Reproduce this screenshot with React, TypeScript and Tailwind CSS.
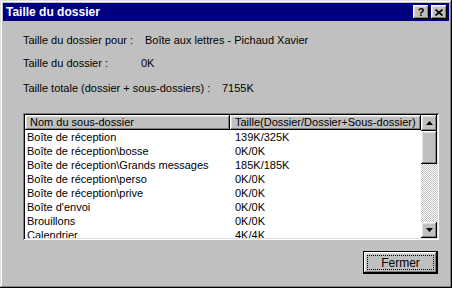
const rows = [
    ['Boîte de réception', '139K/325K'],
    ['Boîte de réception\\bosse', '0K/0K'],
    ['Boîte de réception\\Grands messages', '185K/185K'],
    ['Boîte de réception\\perso', '0K/0K'],
    ['Boîte de réception\\prive', '0K/0K'],
    ["Boîte d'envoi", '0K/0K'],
    ['Brouillons', '0K/0K'],
    ['Calendrier', '4K/4K'],
]

const raised = 'shadow-[inset_-1px_-1px_#000,inset_1px_1px_#fff,inset_-2px_-2px_#808080,inset_2px_2px_#dfdfdf]'

const ScrollButton = ({down = false}: {down?: boolean}) => (
    <div className={`w-[16px] h-[16px] shrink-0 bg-[#c0c0c0] flex items-center justify-center ${raised}`}>
        <svg width="7" height="4" viewBox="0 0 7 4" className="block">
            {down
                ? <polygon points="0,0 7,0 3.5,4" fill="#000"/>
                : <polygon points="0,4 7,4 3.5,0" fill="#000"/>}
        </svg>
    </div>
)

const App = () => {
    return (
        <div className="w-[452px] h-[288px] bg-[#c0c0c0] p-[3px] flex flex-col text-[11px] text-black select-none shadow-[inset_-1px_-1px_#000,inset_1px_1px_#dfdfdf,inset_-2px_-2px_#808080,inset_2px_2px_#fff]"
             style={{fontFamily: '"Liberation Sans", Arial, sans-serif'}}>
            {/* title bar */}
            <div className="h-[18px] shrink-0 bg-[#000080] flex items-center pl-[3px] pr-[2px]">
                <div className="flex-1 text-white font-bold text-[12px] leading-none">Taille du dossier</div>
                <div className="flex gap-[2px]">
                    <div className={`w-[16px] h-[14px] bg-[#c0c0c0] flex items-center justify-center font-bold text-[11px] leading-none ${raised}`}>?</div>
                    <div className={`w-[16px] h-[14px] bg-[#c0c0c0] flex items-center justify-center ${raised}`}>
                        <svg width="8" height="7" viewBox="0 0 8 7" className="block">
                            <path d="M0.5 0.5 L7.5 6.5 M7.5 0.5 L0.5 6.5" stroke="#000" strokeWidth="1.6"/>
                        </svg>
                    </div>
                </div>
            </div>

            {/* info lines */}
            <div className="pl-[20px] pt-[13px] leading-[13px]">
                <div className="flex">
                    <div className="w-[122px]">Taille du dossier pour :</div>
                    <div>Boîte aux lettres - Pichaud Xavier</div>
                </div>
                <div className="flex mt-[10px]">
                    <div className="w-[118px]">Taille du dossier :</div>
                    <div>0K</div>
                </div>
                <div className="flex mt-[12px]">
                    <div className="w-[199px]">Taille totale (dossier + sous-dossiers) :</div>
                    <div>7155K</div>
                </div>
            </div>

            {/* list */}
            <div className="ml-[20px] mt-[18px] w-[416px] h-[127px] bg-white p-[2px] flex shadow-[inset_1px_1px_#808080,inset_-1px_-1px_#fff,inset_2px_2px_#000,inset_-2px_-2px_#dfdfdf]">
                <div className="flex-1 overflow-hidden flex flex-col">
                    <div className="flex h-[15px] shrink-0 leading-[15px]">
                        <div className={`w-[205px] bg-[#c0c0c0] pl-[5px] ${raised}`}>Nom du sous-dossier</div>
                        <div className={`flex-1 bg-[#c0c0c0] pl-[5px] whitespace-nowrap ${raised}`}>Taille(Dossier/Dossier+Sous-dossier)</div>
                    </div>
                    {rows.map(([name, size]) => (
                        <div key={name} className="flex h-[14px] shrink-0 leading-[14px] whitespace-nowrap">
                            <div className="w-[205px] pl-[2px]">{name}</div>
                            <div className="flex-1 pl-[5px]">{size}</div>
                        </div>
                    ))}
                </div>
                <div className="w-[16px] flex flex-col">
                    <ScrollButton/>
                    <div className={`h-[33px] shrink-0 bg-[#c0c0c0] ${raised}`}></div>
                    <div className="flex-1 bg-[repeating-conic-gradient(#c0c0c0_0%_25%,#ffffff_0%_50%)] bg-[length:2px_2px]"></div>
                    <ScrollButton down/>
                </div>
            </div>

            {/* button */}
            <div className="flex justify-end pr-[11px] mt-[11px]">
                <div className="w-[75px] h-[23px] border border-black bg-[#c0c0c0] p-[3px] shadow-[inset_-1px_-1px_#000,inset_1px_1px_#fff,inset_-2px_-2px_#808080,inset_2px_2px_#dfdfdf]">
                    <div className="w-full h-full border border-dotted border-black flex items-center justify-center leading-none text-[12px]">
                        Fermer
                    </div>
                </div>
            </div>
        </div>
    )
}

export default App
